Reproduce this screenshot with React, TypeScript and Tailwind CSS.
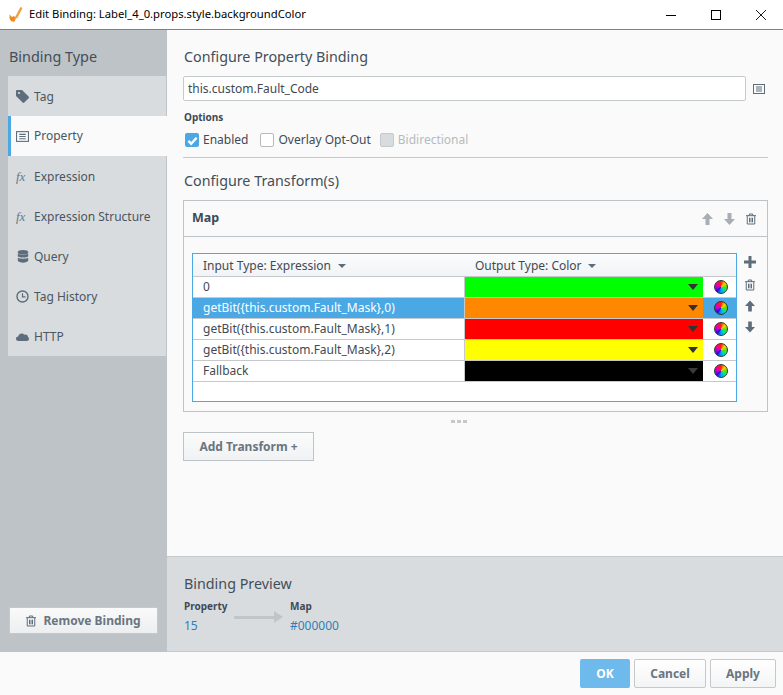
import React from "react";

const Trash = ({ className = "" }: { className?: string }) => (
  <svg viewBox="0 0 12 14" className={className} fill="none" stroke="currentColor" strokeWidth="1.2">
    <path d="M0 3h12M4 3V1h4v2M1.5 3.5v9.5h9V3.5M4.2 5.5V11M6 5.5V11M7.8 5.5V11" />
  </svg>
);

const PropIcon = ({ className = "" }: { className?: string }) => (
  <svg viewBox="0 0 12 10" className={className} fill="none" stroke="currentColor" strokeWidth="1">
    <rect x="0.5" y="0.5" width="11" height="9" />
    <path d="M3 3h6M3 5h6M3 7h6" />
  </svg>
);

const Up = ({ className = "" }: { className?: string }) => (
  <svg viewBox="0 0 11 12" className={className} fill="currentColor">
    <path d="M5.5 0L11 6H7.5V12H3.5V6H0Z" />
  </svg>
);

const Down = ({ className = "" }: { className?: string }) => (
  <svg viewBox="0 0 11 12" className={className} fill="currentColor">
    <path d="M5.5 12L11 6H7.5V0H3.5V6H0Z" />
  </svg>
);

const Fx = () => (
  <span className="w-[13px] text-[13px] italic text-[#6b7680] leading-none font-['Liberation_Serif',serif]">fx</span>
);

const TagIcon = () => (
  <svg viewBox="0 0 13 13" className="w-[13px] h-[13px] text-[#5d6d7c]" fill="currentColor">
    <path d="M0 1.2C0 .5.5 0 1.2 0H6l6.6 6.6c.5.5.5 1.2 0 1.7l-4.3 4.3c-.5.5-1.2.5-1.7 0L0 6Z" />
    <circle cx="3" cy="3" r="1.1" fill="#d9dcdf" />
  </svg>
);

const DbIcon = () => (
  <svg viewBox="0 0 12 13" className="w-[12px] h-[13px] text-[#5d6d7c]" fill="currentColor">
    <ellipse cx="6" cy="2.2" rx="5.2" ry="2.2" />
    <path d="M.8 3.6C1.6 5 10.4 5 11.2 3.6V6.2C10.4 8 1.6 8 .8 6.2Z" />
    <path d="M.8 7.6C1.6 9.2 10.4 9.2 11.2 7.6V10.6C10.4 13.4 1.6 13.4 .8 10.6Z" />
  </svg>
);

const ClockIcon = () => (
  <svg viewBox="0 0 13 13" className="w-[13px] h-[13px] text-[#5d6d7c]" fill="none" stroke="currentColor">
    <circle cx="6.5" cy="6.5" r="5.5" strokeWidth="1.4" />
    <path d="M6.5 3.2V6.8H9.5" strokeWidth="1.2" />
  </svg>
);

const CloudIcon = () => (
  <svg viewBox="0 0 13 9" className="w-[13px] h-[9px] text-[#5d6d7c]" fill="currentColor">
    <path d="M2.6 9C1 9 0 8 0 6.7 0 5.4 1 4.5 2.2 4.5 2.6 2.6 4 1.5 5.6 1.5c1 0 2 .4 2.6 1.2.4-.2.8-.3 1.2-.3 1.5 0 2.6 1.2 2.6 2.6.6.3 1 .9 1 1.7C13 8 12 9 10.6 9Z" />
  </svg>
);

const tabClass = "h-10 flex items-center pl-2 pt-px gap-[5px] text-[#4a5560]";

const Wheel = () => (
  <span className="w-[14px] h-[14px] rounded-full border border-[#2a3a30] bg-[conic-gradient(#ff2000,#ffd000,#60e000,#00e0a0,#00a0ff,#3000e0,#c000e0,#ff0080,#ff2000)]" />
);

const rows = [
  { input: "0", color: "bg-[#00ff00]" },
  { input: "getBit({this.custom.Fault_Mask},0)", color: "bg-[#ff8800]", selected: true },
  { input: "getBit({this.custom.Fault_Mask},1)", color: "bg-[#ff0000]" },
  { input: "getBit({this.custom.Fault_Mask},2)", color: "bg-[#ffff00]" },
  { input: "Fallback", color: "bg-black", faint: true },
];

export default function App() {
  return (
    <div className="w-[783px] h-[695px] flex flex-col bg-[#fafafa] overflow-hidden font-['Noto_Sans',sans-serif] text-[12px] text-[#3f4a54]">
      <div className="h-[30px] shrink-0 bg-white border-b border-[#808080] flex items-center pl-[9px] text-black">
        <svg viewBox="0 0 14 16" className="w-[14px] h-[16px] mr-[6px]">
          <path d="M12.5 0.5L7 11" stroke="#f0a040" strokeWidth="2.4" />
          <path d="M0.5 7.5l2.5 2.5 2-1 2 2-1.5 3.5c-2 1-4.5-1-5-3.5z" fill="#f08a20" />
        </svg>
        <span className="text-[11.25px]">Edit Binding: Label_4_0.props.style.backgroundColor</span>
        <div className="ml-auto flex items-center gap-[35px] pr-[17px]">
          <svg viewBox="0 0 10 10" className="w-[10px] h-[10px]" stroke="black" strokeWidth="1"><path d="M0 5.5h10" /></svg>
          <svg viewBox="0 0 10 10" className="w-[10px] h-[10px]" stroke="black" strokeWidth="1" fill="none"><rect x="0.5" y="0.5" width="9" height="9" /></svg>
          <svg viewBox="0 0 10 10" className="w-[10px] h-[10px]" stroke="black" strokeWidth="0.9"><path d="M0 0l10 10M10 0L0 10" /></svg>
        </div>
      </div>

      <div className="flex-1 flex min-h-0">
        <div className="w-[167px] shrink-0 bg-[#bec3c7] flex flex-col">
          <div className="h-[46px] flex items-end pl-[9px] pb-[8px] text-[14.4px] text-[#434e58]">Binding Type</div>
          <div className="ml-2 w-[158px] bg-[#d9dcdf] flex flex-col">
            <div className={tabClass}><TagIcon />Tag</div>
            <div className="h-10 w-[159px] flex items-center pl-[5px] gap-[5px] bg-[#fafafa] border-l-[3px] border-[#4aa8e4] text-[#4a5560]">
              <PropIcon className="w-[13px] h-[11px] text-[#5d6d7c]" />
              Property
            </div>
            <div className={tabClass}><Fx />Expression</div>
            <div className={tabClass}><Fx />Expression Structure</div>
            <div className={tabClass}><span className="w-[13px] flex justify-end"><DbIcon /></span>Query</div>
            <div className={tabClass}><ClockIcon />Tag History</div>
            <div className={tabClass}><CloudIcon />HTTP</div>
          </div>
          <div className="flex-1" />
          <div className="mb-[18px] ml-[9px] w-[149px] h-[27px] border border-[#c5c9cc] bg-gradient-to-b from-[#fafafa] to-[#eceef0] flex items-center justify-center gap-[7px] font-bold text-[#6b7580]">
            <Trash className="w-[10px] h-[12px] text-[#5d6d7c]" />
            Remove Binding
          </div>
        </div>

        <div className="flex-1 flex flex-col min-w-0">
          <div className="flex-1 pl-4 pr-[15px] min-h-0">
            <div className="pt-[17px] pl-px text-[14.3px] leading-[19px] text-[#434e58]">Configure Property Binding</div>
            <div className="mt-[10px] flex items-center">
              <div className="w-[563px] h-[25px] bg-white border border-[#c5cacd] rounded-[2px] pl-[4px] flex items-center text-[#3f4a54]">
                this.custom.Fault_Code
              </div>
              <PropIcon className="ml-[7px] w-[12px] h-[10px] text-[#5d6d7c]" />
            </div>
            <div className="mt-[9px] text-[10px] leading-[14px] font-bold text-[#3f4a54] pl-px">Options</div>
            <div className="mt-[8px] flex items-center h-[16px] pl-[2px]">
              <span className="w-[14px] h-[14px] rounded-[2px] bg-[#4aa8e4] flex items-center justify-center">
                <svg viewBox="0 0 12 12" className="w-[11px] h-[11px]" fill="none" stroke="white" strokeWidth="2.6"><path d="M1.5 6.5L4.5 9.5L10.5 3" /></svg>
              </span>
              <span className="ml-[4px]">Enabled</span>
              <span className="ml-[12px] w-[14px] h-[14px] rounded-[2px] bg-white border border-[#b5babe]" />
              <span className="ml-[4px]">Overlay Opt-Out</span>
              <span className="ml-[9px] w-[14px] h-[14px] rounded-[2px] bg-[#d9dcdf] border border-[#c5cacd]" />
              <span className="ml-[4px] text-[#b5babe]">Bidirectional</span>
            </div>
            <div className="mt-[9px] border-t border-[#c5c9cc]" />
            <div className="mt-[13px] pl-px text-[14.3px] leading-[19px] text-[#434e58]">Configure Transform(s)</div>
            <div className="mt-[10px] border border-[#bec3c7] h-[212px] flex flex-col">
              <div className="h-[36px] shrink-0 border-b border-[#bec3c7] flex items-center pl-2 pr-[11px]">
                <span className="font-bold text-[12.5px] text-[#3f4a54]">Map</span>
                <div className="ml-auto flex items-center gap-[11px] text-[#a8aeb3]">
                  <Up className="w-[11px] h-[12px]" />
                  <Down className="w-[11px] h-[12px]" />
                  <Trash className="w-[10px] h-[12px] text-[#5d6d7c]" />
                </div>
              </div>
              <div className="pt-4 pl-2 flex">
                <div className="w-[545px] h-[149px] bg-white border border-[#4aa8e4] flex flex-col">
                  <div className="h-[23px] shrink-0 pt-px flex border-b border-[#c5c9cc] bg-gradient-to-b from-[#fcfcfd] to-[#f1f3f5]">
                    <div className="w-[272px] pl-[10px] flex items-center gap-[7px]">
                      Input Type: Expression
                      <span className="w-0 h-0 border-x-[4px] border-x-transparent border-t-[4px] border-t-[#5d6d7c]" />
                    </div>
                    <div className="pl-[10px] flex items-center gap-[6px]">
                      Output Type: Color
                      <span className="w-0 h-0 border-x-[4px] border-x-transparent border-t-[4px] border-t-[#5d6d7c]" />
                    </div>
                  </div>
                  {rows.map((r) => (
                    <div key={r.input} className={`h-[21px] shrink-0 flex border-b border-[#c5c9cc] ${r.selected ? "bg-[#4aa8e4] text-white" : ""}`}>
                      <div className="w-[272px] pl-[10px] flex items-center border-r border-[#c5c9cc]">{r.input}</div>
                      <div className={`w-[238px] flex items-center justify-end pr-[5px] ${r.color}`}>
                        <span className={`w-0 h-0 border-x-[5px] border-x-transparent border-t-[6px] ${r.faint ? "border-t-[#3a3a3a]" : "border-t-[#333]"}`} />
                      </div>
                      <div className="flex-1 flex items-center justify-center pl-[2px]"><Wheel /></div>
                    </div>
                  ))}
                </div>
                <div className="w-[26px] flex flex-col items-center pt-[2px] text-[#5d6d7c]">
                  <svg viewBox="0 0 12 12" className="w-[12px] h-[12px] my-[1px]" fill="currentColor"><path d="M4.5 0h3v4.5H12v3H7.5V12h-3V7.5H0v-3h4.5Z" /></svg>
                  <Trash className="w-[10px] h-[14px] mt-[9px]" />
                  <Up className="w-[10px] h-[12px] mt-[8px]" />
                  <Down className="w-[10px] h-[12px] mt-[9px]" />
                </div>
              </div>
            </div>
            <div className="h-[20px] flex items-center justify-center gap-[2px] pr-[34px] pb-[2px]">
              <span className="w-[4px] h-[3px] bg-[#c5c9cc]" />
              <span className="w-[4px] h-[3px] bg-[#c5c9cc]" />
              <span className="w-[4px] h-[3px] bg-[#c5c9cc]" />
            </div>
            <div className="w-[131px] h-[29px] border border-[#bec3c7] bg-gradient-to-b from-[#fbfbfb] to-[#f0f2f3] flex items-center justify-center font-bold text-[#6b7580]">
              Add Transform +
            </div>
          </div>

          <div className="h-[96px] shrink-0 bg-[#d9dcdf] border-y border-[#c5c9cc] pl-[17px] pt-[17px]">
            <div className="text-[14.3px] leading-[19px] text-[#434e58]">Binding Preview</div>
            <div className="mt-[6px] flex">
              <div className="w-[50px]">
                <div className="text-[10px] leading-[14px] font-bold text-[#3f4a54]">Property</div>
                <div className="mt-[4px] text-[#2f7fb8]">15</div>
              </div>
              <div className="w-[56px] flex items-center">
                <div className="w-[40px] h-[3px] bg-[#c0c5c9]" />
                <div className="w-0 h-0 border-y-[6px] border-y-transparent border-l-[9px] border-l-[#c0c5c9]" />
              </div>
              <div>
                <div className="text-[10px] leading-[14px] font-bold text-[#3f4a54]">Map</div>
                <div className="mt-[4px] text-[#2f7fb8]">#000000</div>
              </div>
            </div>
          </div>
        </div>
      </div>

      <div className="h-[43px] shrink-0 flex items-center justify-end gap-[4px] pr-[7px] font-bold text-[#6b7580]">
        <div className="w-[50px] h-[29px] rounded-[2px] bg-[#6fbaec] text-white flex items-center justify-center">OK</div>
        <div className="w-[72px] h-[29px] rounded-[2px] border border-[#c5c9cc] bg-gradient-to-b from-[#ffffff] to-[#f3f4f5] flex items-center justify-center">Cancel</div>
        <div className="w-[66px] h-[29px] rounded-[2px] border border-[#c5c9cc] bg-gradient-to-b from-[#ffffff] to-[#f3f4f5] flex items-center justify-center">Apply</div>
      </div>
    </div>
  );
}
